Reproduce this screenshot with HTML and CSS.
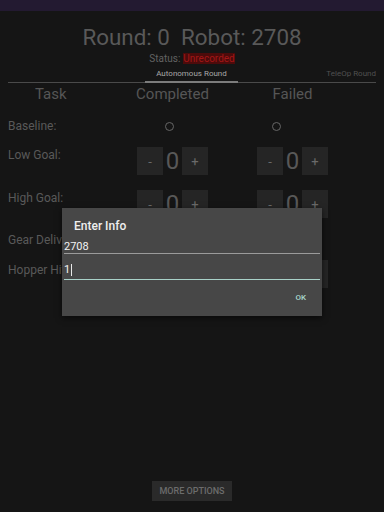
FILE: index.html
```html
<!DOCTYPE html>
<html>
<head>
<meta charset="utf-8">
<link rel="stylesheet" href="styles.css">
</head>
<body>
<div class="topbar"></div>
<div class="page">
  <h1 class="title">Round: 0&nbsp; Robot: 2708</h1>
  <div class="status"><span class="status-label">Status:</span><span class="status-value">Unrecorded</span></div>
  <div class="tabs">
    <div class="tab tab-active">Autonomous Round</div>
    <div class="tab tab-tele">TeleOp Round</div>
  </div>
  <div class="grid">
    <div class="row head">
      <div class="cell label task">Task</div>
      <div class="cell col">Completed</div>
      <div class="cell col">Failed</div>
    </div>
    <div class="row baseline">
      <div class="cell label">Baseline:</div>
      <div class="cell col"><span class="radio r1"></span></div>
      <div class="cell col"><span class="radio r2"></span></div>
    </div>
    <div class="row step-row">
      <div class="cell label">Low Goal:</div>
      <div class="cell col"><div class="stepper"><span class="btn">-</span><span class="num">0</span><span class="btn">+</span></div></div>
      <div class="cell col"><div class="stepper"><span class="btn">-</span><span class="num">0</span><span class="btn">+</span></div></div>
    </div>
    <div class="row step-row">
      <div class="cell label">High Goal:</div>
      <div class="cell col"><div class="stepper"><span class="btn">-</span><span class="num">0</span><span class="btn">+</span></div></div>
      <div class="cell col"><div class="stepper"><span class="btn">-</span><span class="num">0</span><span class="btn">+</span></div></div>
    </div>
    <div class="row gear">
      <div class="cell label">Gear Delivery:</div>
      <div class="cell col"><span class="radio"></span></div>
      <div class="cell col"><span class="radio"></span></div>
    </div>
    <div class="row step-row hopper">
      <div class="cell label">Hopper Hit:</div>
      <div class="cell col"><div class="stepper"><span class="btn">-</span><span class="num">0</span><span class="btn">+</span></div></div>
      <div class="cell col"><div class="stepper"><span class="btn">-</span><span class="num">0</span><span class="btn">+</span></div></div>
    </div>
  </div>
  <div class="footer"><button class="more">MORE OPTIONS</button></div>
</div>
<div class="dialog">
  <div class="dlg-title">Enter Info</div>
  <div class="field first"><span>2708</span></div>
  <div class="field active"><span>1</span><span class="caret"></span></div>
  <div class="actions"><span class="ok">OK</span></div>
</div>
</body>
</html>
```
FILE: styles.css
```css
* { box-sizing: border-box; }
html, body { margin: 0; padding: 0; }
body {
  width: 384px;
  height: 512px;
  background: #151515;
  font-family: Roboto, "Noto Sans", sans-serif;
  color: #5a5a5a;
  position: relative;
  overflow: hidden;
}
.topbar { height: 11px; background: #231a31; }
.page { padding: 0 8px; }
.title {
  margin: 13px 0 0;
  height: 26px;
  line-height: 26px;
  font-size: 22.4px;
  font-weight: 400;
  text-align: center;
  color: #595959;
}
.status {
  margin-top: 3px;
  height: 12px;
  line-height: 12px;
  font-size: 10px;
  text-align: center;
  color: #626262;
}
.status-label { margin-right: 3px; }
.status-value { color: #a31717; background: #4d0b0b; }
.tabs {
  position: relative;
  height: 18px;
  border-bottom: 1px solid #4a4a4a;
  font-size: 8px;
  display: flex;
  align-items: center;
}
.tab { line-height: 12px; }
.tab-active {
  margin-left: 137px;
  width: 93px;
  text-align: center;
  color: #a8a8a8;
  height: 16px;
  padding-top: 1px;
  border-bottom: 2px solid #7c7c7c;
  margin-top: 2px;
}
.tab-tele { margin-left: auto; color: #505050; }
.grid { margin-top: 1px; }
.row { display: flex; }
.cell.label { width: 119px; font-size: 12px; line-height: 14px; color: #595959; white-space: nowrap; }
.cell.col { width: 91px; display: flex; justify-content: center; }
.cell.col + .cell.col { margin-left: 29px; }
.head { height: 20px; align-items: center; font-size: 15px; line-height: 18px; color: #565656; }
.head .cell.label { font-size: 15px; line-height: 18px; padding-left: 27px; color: #565656; }
.baseline { height: 43px; align-items: center; }
.radio {
  width: 9px; height: 9px; border: 1.3px solid #666; border-radius: 50%;
  display: inline-block; margin-top: 1px;
}
.r1 { margin-right: 6px; }
.r2 { margin-right: 32px; }
.step-row { height: 43px; align-items: flex-start; }
.step-row .cell.label { padding-top: 1px; }
.stepper { display: flex; align-items: center; }
.btn {
  width: 26px; height: 28px; background: #252525;
  display: flex; align-items: center; justify-content: center;
  font-size: 13px; color: #6a6a6a;
}
.num { width: 19px; text-align: center; font-size: 24px; color: #585858; line-height: 28px; }
.gear { height: 27px; }
.gear .cell.col { align-items: flex-start; padding-top: 4px; }
.hopper .cell.label { padding-top: 3px; }
.footer {
  position: absolute; left: 0; right: 0; top: 481px;
  display: flex; justify-content: center;
}
.more {
  width: 80px; height: 20px; border: none; margin: 0; padding: 0;
  background: #2a2a2a; color: #6c6c6c;
  font-family: Roboto, sans-serif; font-size: 9px; font-weight: 500;
}
.dialog {
  position: absolute; left: 62px; top: 208px; width: 260px; height: 108px;
  background: #474747;
  box-shadow: 0 2px 6px rgba(0,0,0,0.6);
  padding: 10px 2px 0;
}
.dlg-title {
  font-size: 12px; line-height: 16px; font-weight: 500; color: #efefef;
  padding-left: 10px; height: 16px;
}
.field {
  height: 26px; border-bottom: 1px solid #9b9b9b; color: #f2f2f2;
  font-size: 11px; display: flex; align-items: flex-end; padding-bottom: 3px;
  line-height: 13px;
}
.field.first { height: 20px; padding-bottom: 0; }
.field.active { border-bottom: 1.5px solid #a9d2c9; }
.caret { width: 1px; height: 12px; background: #e8e8e8; margin-left: 1px; }
.actions { display: flex; justify-content: flex-end; padding: 13px 14px 0 0; line-height: 10px; }
.ok { font-size: 8px; font-weight: 500; color: #a8d6cc; }
```
